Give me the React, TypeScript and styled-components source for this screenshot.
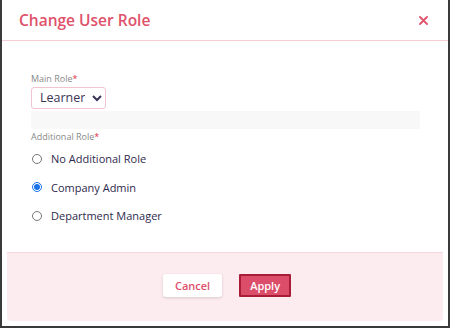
import React, { useState } from 'react';
import { styled, createGlobalStyle } from 'styled-components';

const GlobalStyle = createGlobalStyle`
  html, body {
    margin: 0;
    padding: 0;
    background: #ffffff;
  }
  body {
    font-family: "Open Sans", "Liberation Sans", sans-serif;
  }
`;

const Frame = styled.div`
  width: 450px;
  height: 328px;
  box-sizing: border-box;
  border-left: 2px solid #3a3a3a;
  border-right: 2px solid #3a3a3a;
  border-bottom: 2px solid #3a3a3a;
  background: #fff;
  display: flex;
  flex-direction: column;
`;

const Header = styled.div`
  height: 41px;
  box-sizing: border-box;
  display: flex;
  align-items: center;
  justify-content: space-between;
  padding: 0 19px 0 17px;
  border-bottom: 1px solid #f5cbd4;
`;

const Title = styled.h2`
  margin: 0;
  font-size: 15.5px;
  font-weight: 600;
  color: #e0516b;
`;

const CloseButton = styled.button`
  border: none;
  background: none;
  padding: 0;
  width: 12px;
  height: 12px;
  display: flex;
  align-items: center;
  justify-content: center;
  cursor: pointer;
`;

const Body = styled.div`
  flex: 1;
  padding: 32px 29px 0 29px;
`;

const Label = styled.div`
  font-size: 9px;
  color: #8a8a8a;
  line-height: 12px;
  span {
    color: #e0304a;
  }
`;

const Select = styled.select`
  margin-top: 0;
  width: 75px;
  height: 22px;
  border: 1px solid #f2c4cf;
  border-radius: 3px;
  background: #fff;
  font-family: "Open Sans", "Liberation Sans", sans-serif;
  font-size: 12.5px;
  color: #3a3456;
  padding: 0 4px;
`;

const Spacer = styled.div`
  margin-top: 2px;
  height: 18px;
  width: 389px;
  background: #f8f8f8;
`;

const SubLabel = styled(Label)`
  margin-top: 2px;
`;

const RadioList = styled.div`
  display: flex;
  flex-direction: column;
  gap: 8.5px;
  margin-top: 6px;
`;

const RadioRow = styled.label`
  display: flex;
  align-items: center;
  gap: 9px;
  height: 20px;
  font-size: 11px;
  color: #2e2a4d;
  cursor: pointer;
  input {
    margin: 0 0 0 1px;
    width: 10px;
    height: 10px;
    accent-color: #1a73e8;
  }
`;

const Footer = styled.div`
  margin: 0 5px 5px 5px;
  height: 69px;
  box-sizing: border-box;
  background: #fcebef;
  border-top: 1px solid #f7d5dc;
  border-radius: 0 0 4px 4px;
  display: flex;
  align-items: center;
  justify-content: center;
  gap: 17px;
  padding: 0 0 3px 4px;
`;

const Button = styled.button<{ $primary?: boolean }>`
  height: 23px;
  box-sizing: border-box;
  padding: 0 ${p => (p.$primary ? '9px' : '12px')};
  font-family: "Open Sans", "Liberation Sans", sans-serif;
  font-size: 11px;
  font-weight: 600;
  border-radius: ${p => (p.$primary ? '1px' : '3px')};
  border: ${p => (p.$primary ? '2px solid #a81d37' : 'none')};
  background: ${p => (p.$primary ? '#dc4d6a' : '#ffffff')};
  color: ${p => (p.$primary ? '#ffffff' : '#e0516b')};
  box-shadow: ${p => (p.$primary ? 'none' : '0 1px 3px rgba(0,0,0,0.15)')};
  cursor: pointer;
`;

const roles = ['No Additional Role', 'Company Admin', 'Department Manager'];

export default function App() {
  const [role, setRole] = useState('Company Admin');
  return (
    <>
      <GlobalStyle />
      <Frame>
        <Header>
          <Title>Change User Role</Title>
          <CloseButton aria-label="Close">
            <svg width="9" height="9" viewBox="0 0 9 9">
              <path d="M1 1L8 8M8 1L1 8" stroke="#e0516b" strokeWidth="1.8" strokeLinecap="round" />
            </svg>
          </CloseButton>
        </Header>
        <Body>
          <Label>Main Role<span>*</span></Label>
          <Select defaultValue="Learner">
            <option>Learner</option>
            <option>Instructor</option>
          </Select>
          <Spacer />
          <SubLabel>Additional Role<span>*</span></SubLabel>
          <RadioList>
            {roles.map(r => (
              <RadioRow key={r}>
                <input type="radio" name="role" checked={role === r} onChange={() => setRole(r)} />
                {r}
              </RadioRow>
            ))}
          </RadioList>
        </Body>
        <Footer>
          <Button>Cancel</Button>
          <Button $primary>Apply</Button>
        </Footer>
      </Frame>
    </>
  );
}
